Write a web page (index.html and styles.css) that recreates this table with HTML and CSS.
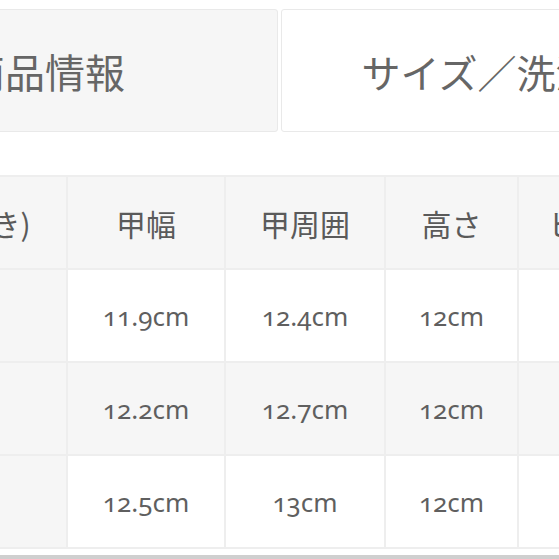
FILE: index.html
```html
<!DOCTYPE html>
<html lang="ja">
<head>
<meta charset="utf-8">
<title>サイズ表</title>
<link rel="stylesheet" href="styles.css">
</head>
<body>
<div class="tabs">
  <div class="tab tab-info">商品情報</div>
  <div class="tab tab-size">サイズ／洗濯表示</div>
</div>
<div class="table-wrap">
  <table class="size-table">
    <colgroup>
      <col class="c-label"><col class="c-w1"><col class="c-w2"><col class="c-w3"><col class="c-w4">
    </colgroup>
    <thead>
      <tr><th>サイズ(中敷き)</th><th>甲幅</th><th>甲周囲</th><th>高さ</th><th>ヒール</th></tr>
    </thead>
    <tbody>
      <tr><td class="label"></td><td>11.9cm</td><td>12.4cm</td><td>12cm</td><td></td></tr>
      <tr class="alt"><td class="label"></td><td>12.2cm</td><td>12.7cm</td><td>12cm</td><td></td></tr>
      <tr><td class="label"></td><td>12.5cm</td><td>13cm</td><td>12cm</td><td></td></tr>
    </tbody>
  </table>
</div>
<div class="rule"></div>
</body>
</html>
```
FILE: styles.css
```css
html, body {
  margin: 0;
  padding: 0;
  overflow: hidden;
  background: #fff;
}
body {
  font-family: "Noto Sans", "Noto Sans CJK JP", sans-serif;
}
.tabs {
  display: flex;
  gap: 3px;
  margin: 9px 0 0 -188px;
  height: 123px;
}
.tab {
  flex: none;
  box-sizing: border-box;
  display: flex;
  align-items: center;
  justify-content: center;
  border: 1px solid #e9e9e9;
  border-radius: 3px;
  font-family: "Noto Sans CJK JP", sans-serif;
  color: #666;
}
.tab-info {
  width: 466px;
  font-size: 40px;
  background: #f6f6f6;
}
.tab-size {
  width: 472px;
  font-size: 39px;
  background: #fff;
}
.table-wrap {
  margin-top: 43px;
  overflow: hidden;
}
.size-table {
  border-collapse: collapse;
  table-layout: fixed;
  width: 873px;
  margin-left: -206px;
}
.c-label { width: 272px; }
.c-w1 { width: 158px; }
.c-w2 { width: 160px; }
.c-w3 { width: 133px; }
.c-w4 { width: 150px; }
.size-table th,
.size-table td {
  height: 91px;
  padding: 0;
  border: 2px solid #eeeeee;
  text-align: center;
  vertical-align: middle;
  background: #fff;
}
.size-table th {
  background: #f6f6f6;
  font-family: "Noto Sans CJK JP", sans-serif;
  font-weight: normal;
  font-size: 30px;
  color: #5a5a5a;
}
.size-table td {
  font-size: 26px;
  color: #5f5f5f;
  font-variant-numeric: oldstyle-nums;
}
.size-table td.label,
.size-table tr.alt td {
  background: #f6f6f6;
}
.rule {
  margin-top: 6px;
  height: 4px;
  background: #cfcfcf;
}
```
